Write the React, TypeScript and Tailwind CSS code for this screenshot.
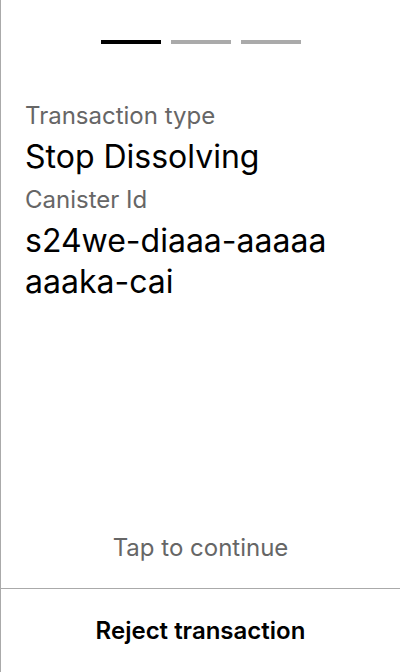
const Step = ({ active }: { active?: boolean }) => (
  <div className={active ? "w-[60px] h-[4px] bg-black" : "w-[60px] h-[4px] bg-[#aaaaaa]"} />
);

const App = () => {
  return (
    <div
      className="w-[400px] h-[672px] flex flex-col bg-white border-l border-[#aaaaaa] text-black"
      style={{ fontFamily: "Inter, 'Noto Sans', sans-serif" }}
    >
      <div className="flex justify-center gap-[10px] pt-[40px]">
        <Step active />
        <Step />
        <Step />
      </div>

      <div className="flex flex-col pl-[24px] pr-4 pt-[56px]">
        <span className="text-[24px] leading-[32px] text-[#666666]">Transaction type</span>
        <span className="text-[32px] leading-[40px] mt-[5px]">Stop Dissolving</span>
        <span className="text-[24px] leading-[32px] text-[#666666] mt-[7px]">Canister Id</span>
        <span className="text-[32px] leading-[41px] mt-[4px]">s24we-diaaa-aaaaa aaaka-cai</span>
      </div>

      <div className="flex-1" />

      <div className="text-center text-[24px] leading-[32px] text-[#666666] pb-[24px]">Tap to continue</div>

      <button className="h-[84px] w-full border-t border-[#aaaaaa] text-[24px] font-semibold text-black">
        Reject transaction
      </button>
    </div>
  );
};

export default App;
